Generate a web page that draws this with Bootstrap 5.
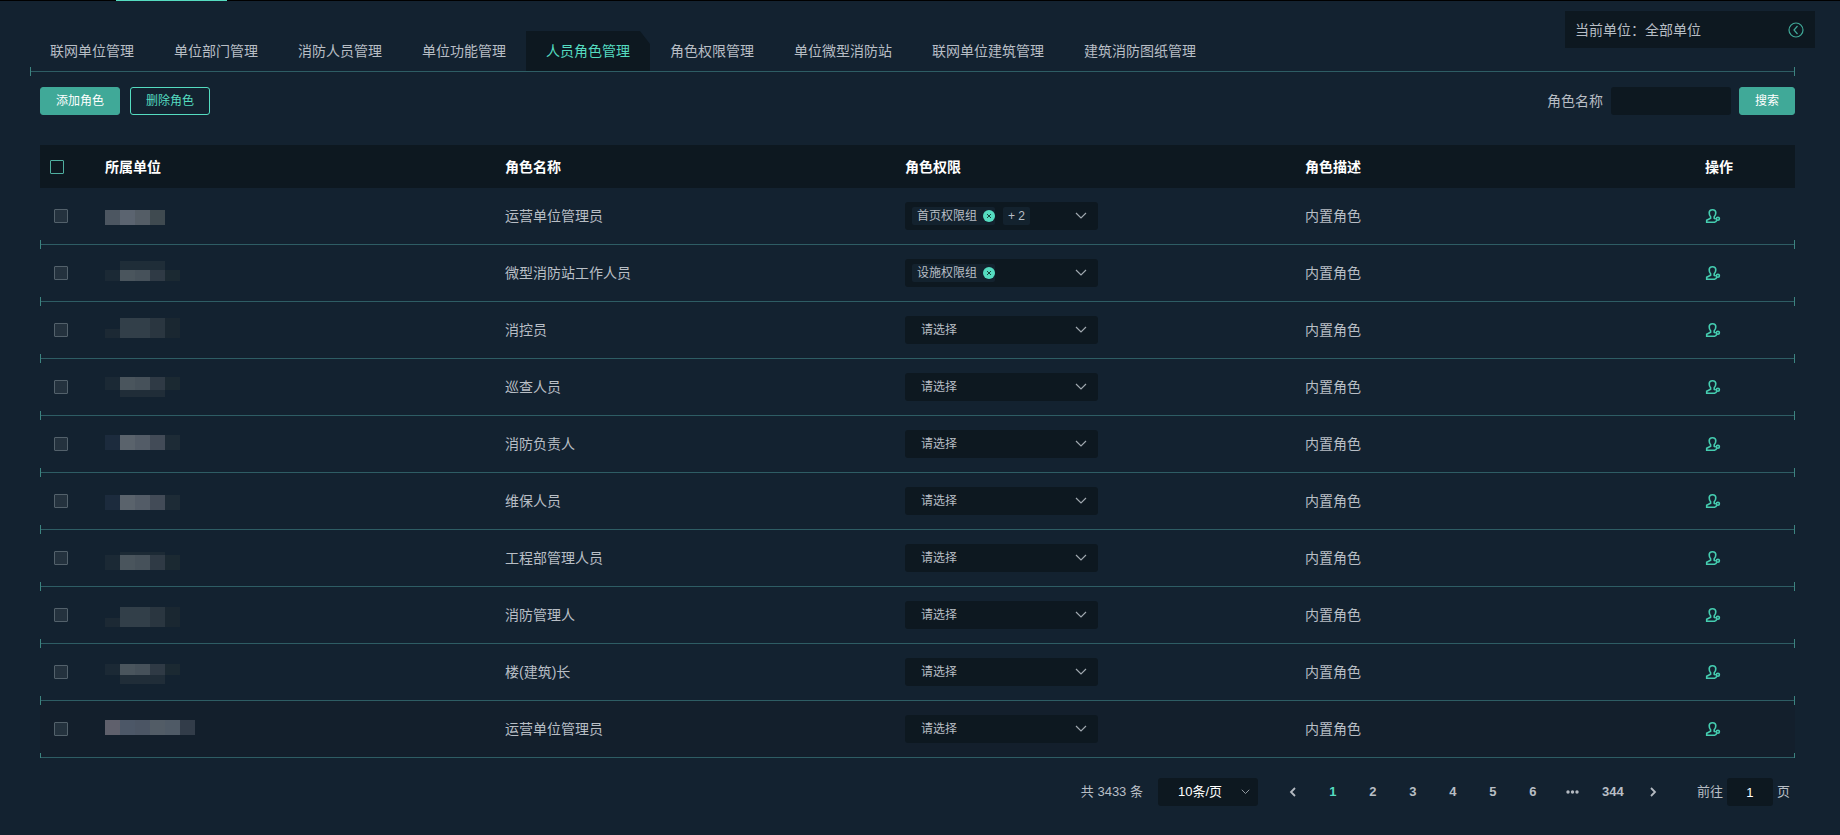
<!DOCTYPE html>
<html lang="zh-CN">
<head>
<meta charset="utf-8">
<meta name="viewport" content="width=device-width, initial-scale=1">
<title>人员角色管理</title>
<link href="https://cdn.jsdelivr.net/npm/bootstrap@5.3.0/dist/css/bootstrap.min.css" rel="stylesheet">
<style>
  :root { --ink:#b8bec5; --mint:#55dcc0; --fill:#40a998; --page:#132230; --deep:#0d1820; --rule:#2e5d64; }
  body { background:var(--page); color:var(--ink); font:14px/20px "Liberation Sans","Noto Sans CJK SC",sans-serif; min-height:100vh; }
  .topline { height:1px; background:#000; }
  .topline span { height:1px; width:111px; margin-left:116px; background:var(--mint); }
  .head { padding:10px 25px 0 30px; }
  .tabs { padding-top:20px; }
  .tabs .nav-link { color:var(--ink); padding:10px 20px; }
  .tabs .nav-link.active { color:var(--mint); background:var(--deep); clip-path:polygon(0 0,calc(100% - 10px) 0,100% 13px,100% 100%,0 100%); }
  .unit { width:250px; height:37px; background:var(--deep); padding:0 11px 0 10px; }
  .ruler { height:1px; margin:0 45px 15px 30px; background:var(--rule); position:relative; }
  .ruler::before,.ruler::after { content:""; position:absolute; top:-4px; height:9px; width:1px; background:#3c8480; }
  .ruler::before { left:0; } .ruler::after { right:0; }
  .page-body { padding:0 45px 0 40px; }
  .actions { gap:10px; }
  .act { height:28px; border-radius:3px; border:1px solid var(--fill); background:var(--fill); color:#fff; font-size:12px; line-height:16px; padding:0; width:80px; }
  .act.ghost { background:transparent; color:var(--mint); border-color:var(--mint); }
  .act.narrow { width:56px; }
  .field { height:28px; border:0; border-radius:3px; background:var(--deep); color:#fff; }
  #roleName { width:120px; }
  .roles { table-layout:fixed; border-collapse:separate; border-spacing:0; width:100%; margin:30px 0 20px; }
  .roles .narrow-col { width:55px; } .roles .act-col { width:100px; }
  .roles th { height:43px; background:var(--deep); color:#fff; padding:0 10px; }
  .roles td { height:57px; padding:0 10px; border-bottom:1px solid var(--rule); }
  .roles td:first-child { padding-left:14px; }
  .roles td:first-child,.roles td:last-child { position:relative; }
  .roles td:first-child::after,.roles td:last-child::after { content:""; position:absolute; z-index:1; bottom:-5px; height:9px; width:1px; background:#3c8480; }
  .roles td:first-child::after { left:0; } .roles td:last-child::after { right:0; }
  .roles tbody tr:last-child td { background:#131f2c; }
  .roles tbody tr:last-child td::after { bottom:-1px; height:5px; }
  .tick { appearance:none; display:block; width:14px; height:14px; margin:0; border:1px solid #53616b; border-radius:1px; background:#24323e; }
  .tick:checked { background:var(--fill); }
  thead .tick { border-color:#4fae9f; background:var(--deep); }
  .pick { width:193px; height:28px; border:0; border-radius:3px; appearance:none; color:var(--ink); font-size:12px; padding:0 30px 0 16px; display:block;
    background:var(--deep) url("data:image/svg+xml,%3Csvg xmlns='http://www.w3.org/2000/svg' width='12' height='8'%3E%3Cpath d='M1 1l5 5 5-5' fill='none' stroke='%23a0a8af' stroke-width='1.2'/%3E%3C/svg%3E") no-repeat right 11px center; }
  .pick.size { width:100px; color:#fff; font-size:13px; padding:0 20px; margin:0 12px 0 15px; background-size:9px 6px; background-position:right 8px center; }
  .tagbox { padding:0 7px; }
  .chip { height:18px; line-height:18px; background:#13222e; border-radius:2px; padding-left:5px; gap:6px; }
  .chip.more { padding-right:5px; }
  .bare { border:0; background:none; padding:0; color:inherit; display:flex; align-items:center; justify-content:center; }
  .mosaic { display:block; }
  .pager { font-size:13px; }
  .pager .page-btn { width:40px; height:28px; font-weight:700; }
  .pager .page-btn.active { color:var(--mint); }
  .pager .prev { margin-left:3px; }
  .goto { margin-left:24px; }
  #goPage { width:46px; margin:0 4px; }
  .goto-end { margin-right:5px; }
</style>
</head>
<body>
<div class="topline"><span class="d-block"></span></div>
<header class="head d-flex justify-content-between align-items-start">
  <nav class="nav tabs">
    <a class="nav-link" href="#">联网单位管理</a>
    <a class="nav-link" href="#">单位部门管理</a>
    <a class="nav-link" href="#">消防人员管理</a>
    <a class="nav-link" href="#">单位功能管理</a>
    <a class="nav-link active" aria-current="page" href="#">人员角色管理</a>
    <a class="nav-link" href="#">角色权限管理</a>
    <a class="nav-link" href="#">单位微型消防站</a>
    <a class="nav-link" href="#">联网单位建筑管理</a>
    <a class="nav-link" href="#">建筑消防图纸管理</a>
  </nav>
  <div class="unit d-flex align-items-center justify-content-between">
    <span>当前单位：全部单位</span>
    <button class="bare" type="button" aria-label="收起"><svg width="16" height="16" fill="none" stroke="#40a998" stroke-width="1.2"><circle cx="8" cy="8" r="7"/><path d="M9.500 4L6 8l3.500 4"/></svg></button>
  </div>
</header>
<div class="ruler"></div>
<main class="page-body">
  <div class="d-flex justify-content-between">
    <div class="actions d-flex">
      <button class="act" type="button">添加角色</button>
      <button class="act ghost" type="button">删除角色</button>
    </div>
    <form class="d-flex align-items-center gap-2">
      <label for="roleName">角色名称</label>
      <input class="field" id="roleName" type="text">
      <button class="act narrow" type="button">搜索</button>
    </form>
  </div>
  <table class="roles">
    <colgroup><col class="narrow-col"><col><col><col><col><col class="act-col"></colgroup>
    <thead><tr><th><input class="tick" type="checkbox" aria-label="全选"></th><th>所属单位</th><th>角色名称</th><th>角色权限</th><th>角色描述</th><th>操作</th></tr></thead>
    <tbody id="rows"></tbody>
  </table>
  <div class="pager d-flex align-items-center justify-content-end">
    <span>共 3433 条</span>
    <select class="pick size" aria-label="每页条数"><option>10条/页</option></select>
    <button class="bare page-btn prev" type="button" aria-label="上一页"><svg width="8" height="10" fill="none" stroke="#b4bac1" stroke-width="1.8"><path d="M6 1L2 5l4 4"/></svg></button>
    <button class="bare page-btn active" type="button">1</button>
    <button class="bare page-btn" type="button">2</button>
    <button class="bare page-btn" type="button">3</button>
    <button class="bare page-btn" type="button">4</button>
    <button class="bare page-btn" type="button">5</button>
    <button class="bare page-btn" type="button">6</button>
    <button class="bare page-btn" type="button" aria-label="更多"><svg width="13" height="4" fill="#b4bac1"><circle cx="2" cy="2" r="1.7"/><circle cx="6.5" cy="2" r="1.7"/><circle cx="11" cy="2" r="1.7"/></svg></button>
    <button class="bare page-btn" type="button">344</button>
    <button class="bare page-btn" type="button" aria-label="下一页"><svg width="8" height="10" fill="none" stroke="#b4bac1" stroke-width="1.8"><path d="M2 1l4 4-4 4"/></svg></button>
    <label class="goto" for="goPage">前往</label>
    <input class="field text-center" id="goPage" type="text" value="1">
    <span class="goto-end">页</span>
  </div>
</main>
<script src="https://cdn.jsdelivr.net/npm/bootstrap@5.3.0/dist/js/bootstrap.bundle.min.js"></script>
<script>
  // Masked unit names: each block is [x, y, width, height, colour]
  const strip = (y, h, c) => c.map((f, i) => [i * 15, y, 15, h, f]);
  const dim = ['#1b2935', '#4a555d', '#46515a', '#2f3a45', '#1b2932'];
  const bright = ['#1c2b3d', '#5a636c', '#535c67', '#424b57', '#1d2b36'];
  const tall = y => [[0, y + 11, 15, 9, '#1c2934'], [15, y, 30, 20, '#323f49'], [45, y, 15, 20, '#2a3640'], [60, y, 15, 20, '#1a2731']];
  const data = [
    ['运营单位管理员', strip(8, 15, ['#4c5661', '#5b6470', '#545d66', '#3f4a50']), ['首页权限组', '+ 2']],
    ['微型消防站工作人员', [[15, 2, 45, 9, '#1f2d38'], ...strip(11, 11, dim)], ['设施权限组']],
    ['消控员', tall(2)],
    ['巡查人员', [...strip(4, 13, dim), [15, 17, 45, 7, '#202d38']]],
    ['消防负责人', strip(5, 15, bright)],
    ['维保人员', strip(8, 15, bright)],
    ['工程部管理人员', [[15, 8, 45, 3, '#1c2a35'], ...strip(11, 15, dim)]],
    ['消防管理人', tall(6)],
    ['楼(建筑)长', [...strip(6, 11, dim), [15, 17, 45, 9, '#202d38']]],
    ['运营单位管理员', strip(5, 15, ['#5f606c', '#4c5767', '#4b5564', '#525c66', '#4f5a66', '#323c49'])]
  ];
  const mosaic = m => `<svg class="mosaic" width="90" height="28">${m.map(r => `<rect x="${r[0]}" y="${r[1]}" width="${r[2]}" height="${r[3]}" fill="${r[4]}"/>`).join('')}</svg>`;
  const close = '<button class="bare" type="button" aria-label="移除"><svg width="12" height="12"><circle cx="6" cy="6" r="6" fill="#55dcc0"/><path d="M4 4l4 4M8 4l-4 4" stroke="#17463f" stroke-width="1"/></svg></button>';
  const picker = t => t
    ? `<div class="pick tagbox d-flex align-items-center gap-2"><span class="chip d-flex align-items-center">${t[0]}${close}</span>${t[1] ? `<span class="chip more">${t[1]}</span>` : ''}</div>`
    : '<select class="pick" aria-label="角色权限"><option>请选择</option></select>';
  const person = '<button class="bare" type="button" aria-label="分配人员"><svg width="16" height="16" fill="none" stroke="#45cdb0" stroke-width="1.6"><path d="M10.200 14.200H1.700V12.200L5.600 10.200V8.800C4.500 7.600 4.200 6.200 4.200 4.700C4.200 2.700 5.500 1.700 7.500 1.700S10.800 2.700 10.800 4.700C10.800 6.200 10.300 7.600 9.200 8.800V10.200L10.700 11"/><circle cx="12.900" cy="10.800" r="1.500"/><path d="M11.900 12.200l-1.700 2"/></svg></button>';
  document.getElementById('rows').innerHTML = data.map(([name, m, tags]) =>
    `<tr><td><input class="tick" type="checkbox" aria-label="选择${name}"></td><td>${mosaic(m)}</td><td>${name}</td><td>${picker(tags)}</td><td>内置角色</td><td>${person}</td></tr>`).join('');
</script>
</body>
</html>
